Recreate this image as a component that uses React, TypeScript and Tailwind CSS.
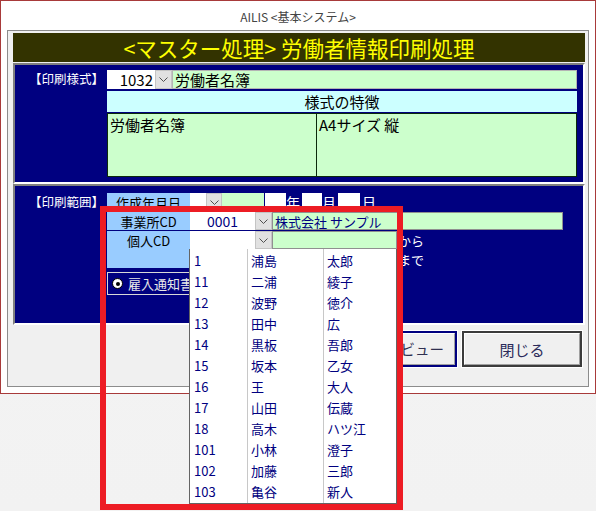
import React from "react";

const Chevron = () => (
  <svg width="9" height="5" viewBox="0 0 9 5">
    <polyline points="0.5,0.5 4.5,4.5 8.5,0.5" fill="none" stroke="#505050" strokeWidth="1" />
  </svg>
);

const DropBtn = ({ w }: { w: string }) => (
  <div className={`${w} h-full bg-[#e1e1e1] border border-[#c4c4c4] flex items-center justify-center`}>
    <Chevron />
  </div>
);

const rows: [string, string, string][] = [
  ["1", "浦島", "太郎"],
  ["11", "二浦", "綾子"],
  ["12", "波野", "徳介"],
  ["13", "田中", "広"],
  ["14", "黒板", "吾郎"],
  ["15", "坂本", "乙女"],
  ["16", "王", "大人"],
  ["17", "山田", "伝蔵"],
  ["18", "高木", "ハツ江"],
  ["101", "小林", "澄子"],
  ["102", "加藤", "三郎"],
  ["103", "亀谷", "新人"],
];

export default function App() {
  return (
    <div className="relative w-[596px] h-[511px] overflow-hidden bg-gradient-to-b from-[#f5f5f5] to-[#f2f2f2] font-['Noto_Sans_CJK_JP',sans-serif]">
      {/* window */}
      <div className="h-[394px] border border-[#a83a3a] bg-white flex flex-col">
        <div className="h-[29px] pt-[3px] flex items-center justify-center text-[12px] leading-none text-[#444]">
          AILIS &lt;基本システム&gt;
        </div>
        <div className="mx-[6px] h-[357px] border border-[#8c8c8c] bg-[#f0f0f0] pl-[5px] pr-[3px] pt-[2px] flex flex-col">
          {/* title bar */}
          <div className="h-[29px] bg-[#333300] text-[#ffff00] text-[21.5px] leading-none flex items-center justify-center">
            &lt;マスター処理&gt; 労働者情報印刷処理
          </div>

          {/* panel 1 */}
          <div className="mt-[1px] h-[121px] border-2 border-t-[#808080] border-l-[#808080] border-b-white border-r-white bg-[#000080] flex">
            <div className="w-[92px] pt-[5px] pl-[14px]">
              <div className="h-[19px] flex items-center text-white text-[12.5px] leading-none whitespace-nowrap">【印刷様式】</div>
            </div>
            <div className="w-[470px] pt-[5px] flex flex-col">
              <div className="h-[19px] flex text-[15px] leading-none text-black">
                <div className="w-[48px] h-full bg-white flex items-center justify-end pr-[2px]">1032</div>
                <DropBtn w="w-[17px]" />
                <div className="flex-1 h-full bg-[#ccffcc] border border-[#b4b4b4] flex items-center pl-[2px]">労働者名簿</div>
              </div>
              <div className="mt-[2px] h-[21px] bg-[#ccffff] flex items-center justify-center text-[15px] leading-none text-black">
                様式の特徴
              </div>
              <div className="mt-[1px] h-[64px] bg-[#ccffcc] border border-[#0a2a0a] flex text-[15px] leading-none text-black">
                <div className="w-[209px] h-full border-r border-[#0a2a0a] pl-[2px] pt-[3px]">労働者名簿</div>
                <div className="flex-1 pl-[2px] pt-[3px]">A4サイズ 縦</div>
              </div>
            </div>
          </div>

          {/* panel 2 */}
          <div className="h-[141px] border-2 border-t-[#808080] border-l-[#808080] border-b-white border-r-white bg-[#000080] flex">
            <div className="w-[92px] pt-[7px] pl-[14px]">
              <div className="h-[19px] flex items-center text-white text-[12.5px] leading-none whitespace-nowrap">【印刷範囲】</div>
            </div>
            <div className="flex-1 pt-[7px] flex flex-col text-[13px] leading-none">
              {/* row A */}
              <div className="h-[18px] flex items-stretch">
                <div className="w-[83px] bg-[#99ccff] flex items-center justify-center text-black">作成年月日</div>
                <div className="w-[16px] bg-white" />
                <DropBtn w="w-[16px]" />
                <div className="w-[42px] bg-[#ccffcc]" />
                <div className="ml-[1px] w-[21px] bg-white" />
                <div className="w-[16px] flex items-center text-white text-[14px]">年</div>
                <div className="w-[20px] bg-white" />
                <div className="w-[16px] flex items-center text-white text-[14px]">月</div>
                <div className="w-[22px] bg-white" />
                <div className="ml-[2px] flex items-center text-white text-[14px]">日</div>
              </div>
              {/* row B */}
              <div className="mt-[1px] h-[18px] flex items-stretch">
                <div className="w-[83px] bg-[#99ccff] flex items-center justify-center text-black">事業所CD</div>
                <div className="w-[65px] bg-white flex items-center justify-center text-[#000080] text-[14px]">0001</div>
                <DropBtn w="w-[17px]" />
                <div className="w-[291px] bg-[#ccffcc] border border-[#909090] flex items-center pl-[2px] text-[#000080]">
                  株式会社 サンプル
                </div>
              </div>
              {/* row C */}
              <div className="mt-[1px] flex">
                <div className="w-[83px] h-[37px] bg-[#99ccff] flex justify-center pt-[3px] text-black">個人CD</div>
                <div className="flex flex-col gap-[1px]">
                  <div className="h-[18px] flex items-stretch">
                    <div className="w-[65px] bg-white" />
                    <DropBtn w="w-[17px]" />
                    <div className="w-[125px] bg-[#ccffcc] border border-[#909090]" />
                    <div className="ml-[1px] flex items-center text-white">から</div>
                  </div>
                  <div className="h-[18px] flex items-stretch">
                    <div className="w-[65px] bg-white" />
                    <DropBtn w="w-[17px]" />
                    <div className="w-[125px] bg-[#ccffcc] border border-[#909090]" />
                    <div className="ml-[1px] flex items-center text-white">まで</div>
                  </div>
                </div>
              </div>
              {/* radio frame */}
              <div className="mt-[4px] w-[200px] h-[23px] border border-[#d8d8d8] flex items-center pl-[4px] gap-[5px]">
                <div className="w-[11px] h-[11px] rounded-full bg-white border border-black flex items-center justify-center">
                  <div className="w-[4px] h-[4px] rounded-full bg-black" />
                </div>
                <span className="text-[#e8e8e8] text-[13px]">雇入通知書</span>
              </div>
            </div>
          </div>

          {/* buttons */}
          <div className="mt-[6px] mr-[3px] flex justify-end gap-[5px]">
            <div className="w-[120px] h-[36px] border-2 border-[#000080] shadow-[0_0_0_1px_white]">
              <div className="w-full h-full border border-t-white border-l-white border-b-[#a0a0a0] border-r-[#a0a0a0] bg-[#f0f0f0] flex items-center justify-end pr-[10px] text-[14.5px] leading-none text-[#303050]">
                印刷プレビュー
              </div>
            </div>
            <div className="w-[120px] h-[36px] border-2 border-[#3c3c3c] shadow-[0_0_0_1px_white]">
              <div className="w-full h-full border border-t-white border-l-white border-b-[#a0a0a0] border-r-[#a0a0a0] bg-[#f0f0f0] flex items-center justify-center text-[15px] leading-none text-[#2a2a5a]">
                閉じる
              </div>
            </div>
          </div>
        </div>
      </div>

      {/* dropdown list overlay */}
      <div className="absolute left-[189px] top-[249px] w-[208px] h-[255px] bg-white border border-t-0 border-[#646464] pt-[1px] text-[13px] leading-none text-[#000080]">
        <div className="absolute left-[57px] top-0 bottom-0 w-px bg-[#c8c8c8]" />
        <div className="absolute left-[133px] top-0 bottom-0 w-px bg-[#c8c8c8]" />
        {rows.map(([a, b, c]) => (
          <div key={a} className="h-[21px] grid grid-cols-[58px_76px_1fr] items-center">
            <div className="pl-[4px]">{a}</div>
            <div className="pl-[3px]">{b}</div>
            <div className="pl-[3px]">{c}</div>
          </div>
        ))}
      </div>

      {/* red annotation */}
      <div className="absolute left-[100px] top-[206px] w-[303px] h-[304px] border-[6px] border-[#ed1c24]" />
    </div>
  );
}
